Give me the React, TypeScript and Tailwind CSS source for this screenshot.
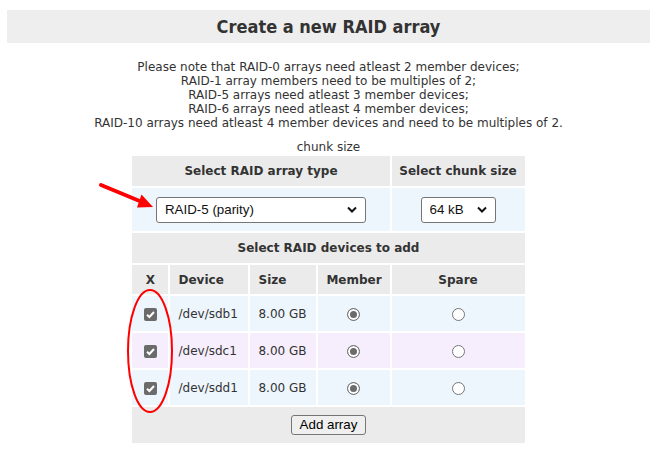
import { useState } from "react";

const devices = [
  { name: "/dev/sdb1", size: "8.00 GB", bg: "bg-[#edf5fd]" },
  { name: "/dev/sdc1", size: "8.00 GB", bg: "bg-[#f6eefd]" },
  { name: "/dev/sdd1", size: "8.00 GB", bg: "bg-[#edf5fd]" },
];

function Chevron() {
  return (
    <svg width="10" height="7" viewBox="0 0 10 7" className="shrink-0">
      <path d="M1 1.5 L5 5.5 L9 1.5" fill="none" stroke="#111" strokeWidth="2" />
    </svg>
  );
}

function App() {
  const [raidType, setRaidType] = useState("raid5");
  const [chunk, setChunk] = useState("64");
  const [roles, setRoles] = useState<Record<string, string>>({
    "/dev/sdb1": "member",
    "/dev/sdc1": "member",
    "/dev/sdd1": "member",
  });

  return (
    <div className="relative w-[666px] h-[465px] bg-white text-[#333] font-['DejaVu_Sans',sans-serif] overflow-hidden">
      <div className="ml-[7px] w-[643px] pt-[10px]">
        {/* title */}
        <div className="h-[33px] bg-[#eeeeee] flex items-center justify-center">
          <h1 className="text-[18px] font-bold font-['DejaVu_Sans_Condensed','DejaVu_Sans',sans-serif] text-[#333]">
            Create a new RAID array
          </h1>
        </div>

        {/* notes */}
        <p className="mt-[17px] text-center text-[12px] leading-[14px]">
          Please note that RAID-0 arrays need atleast 2 member devices;
          <br />
          RAID-1 array members need to be multiples of 2;
          <br />
          RAID-5 arrays need atleast 3 member devices;
          <br />
          RAID-6 arrays need atleast 4 member devices;
          <br />
          RAID-10 arrays need atleast 4 member devices and need to be multiples of 2.
        </p>

        <table className="mx-auto mt-[10px] w-[396px] table-fixed border-separate border-spacing-[2px] text-[12px]">
          <caption className="text-[12px] leading-[14px]">chunk size</caption>
          <colgroup>
            <col className="w-[36px]" />
            <col className="w-[78px]" />
            <col className="w-[66px]" />
            <col className="w-[71px]" />
            <col className="w-[133px]" />
          </colgroup>
          <tbody>
            <tr className="h-[30px]">
              <th colSpan={4} className="bg-[#ebebeb] font-bold">
                Select RAID array type
              </th>
              <th className="bg-[#ebebeb] font-bold">Select chunk size</th>
            </tr>
            <tr className="h-[43px]">
              <td colSpan={4} className="bg-[#edf5fd]">
                <label className="mx-auto flex w-[210px] h-[26px] items-center rounded-[3px] border border-[#767676] bg-white pr-[8px]">
                  <select
                    value={raidType}
                    onChange={(e) => setRaidType(e.target.value)}
                    className="flex-1 appearance-none pl-[8px] text-[13.33px] text-[#111] outline-none font-['Liberation_Sans',sans-serif]"
                  >
                    <option value="raid0">RAID-0 (stripe)</option>
                    <option value="raid1">RAID-1 (mirror)</option>
                    <option value="raid5">RAID-5 (parity)</option>
                    <option value="raid6">RAID-6 (double parity)</option>
                    <option value="raid10">RAID-10 (stripe of mirrors)</option>
                  </select>
                  <Chevron />
                </label>
              </td>
              <td className="bg-[#edf5fd]">
                <label className="mx-auto flex w-[75px] h-[26px] items-center rounded-[3px] border border-[#767676] bg-white pr-[8px]">
                  <select
                    value={chunk}
                    onChange={(e) => setChunk(e.target.value)}
                    className="w-[50px] flex-1 appearance-none pl-[8px] text-[13.33px] text-[#111] outline-none font-['Liberation_Sans',sans-serif]"
                  >
                    <option value="4">4 kB</option>
                    <option value="16">16 kB</option>
                    <option value="64">64 kB</option>
                    <option value="256">256 kB</option>
                  </select>
                  <Chevron />
                </label>
              </td>
            </tr>
            <tr className="h-[30px]">
              <th colSpan={5} className="bg-[#ebebeb] font-bold">
                Select RAID devices to add
              </th>
            </tr>
            <tr className="h-[29px]">
              <th className="bg-[#ebebeb] font-bold">X</th>
              <th className="bg-[#ebebeb] font-bold text-left pl-[8px]">Device</th>
              <th className="bg-[#ebebeb] font-bold text-left pl-[8px]">Size</th>
              <th className="bg-[#ebebeb] font-bold">Member</th>
              <th className="bg-[#ebebeb] font-bold">Spare</th>
            </tr>
            {devices.map((d) => (
              <tr key={d.name} className="h-[35px]">
                <td className={d.bg + " text-center"}>
                  <span className="relative inline-flex align-middle">
                    <input
                      type="checkbox"
                      defaultChecked
                      className="appearance-none w-[13px] h-[13px] rounded-[2px] bg-[#6b6b6b]"
                    />
                    <svg
                      width="13"
                      height="13"
                      viewBox="0 0 13 13"
                      className="pointer-events-none absolute left-0 top-0"
                    >
                      <path d="M3 6.8 L5.4 9 L10 4" fill="none" stroke="white" strokeWidth="2" />
                    </svg>
                  </span>
                </td>
                <td className={d.bg + " pl-[8px]"}>{d.name}</td>
                <td className={d.bg + " pl-[8px]"}>{d.size}</td>
                <td className={d.bg + " text-center"}>
                  <input
                    type="radio"
                    name={d.name}
                    checked={roles[d.name] === "member"}
                    onChange={() => setRoles({ ...roles, [d.name]: "member" })}
                    className="appearance-none align-middle w-[13px] h-[13px] rounded-full border border-[#767676] bg-white checked:bg-[#6b6b6b] checked:shadow-[inset_0_0_0_2px_white]"
                  />
                </td>
                <td className={d.bg + " text-center"}>
                  <input
                    type="radio"
                    name={d.name}
                    checked={roles[d.name] === "spare"}
                    onChange={() => setRoles({ ...roles, [d.name]: "spare" })}
                    className="appearance-none align-middle w-[13px] h-[13px] rounded-full border border-[#767676] bg-white checked:bg-[#6b6b6b] checked:shadow-[inset_0_0_0_2px_white]"
                  />
                </td>
              </tr>
            ))}
            <tr className="h-[36px]">
              <td colSpan={5} className="bg-[#ebebeb] text-center">
                <button className="w-[75px] h-[20px] rounded-[3px] border border-[#767676] bg-[#efefef] text-[13.33px] leading-none text-black font-['Liberation_Sans',sans-serif]">
                  Add array
                </button>
              </td>
            </tr>
          </tbody>
        </table>
      </div>

      {/* red annotations */}
      <svg
        width="666"
        height="465"
        className="pointer-events-none absolute left-0 top-0"
      >
        <line x1="101" y1="185" x2="142" y2="202" stroke="#f00" strokeWidth="4" strokeLinecap="round" />
        <polygon points="153,207 141.5,194.5 137,207.5" fill="#f00" />
        <ellipse cx="150" cy="351" rx="22" ry="61" fill="none" stroke="#f00" strokeWidth="2" />
      </svg>
    </div>
  );
}

export default App;
